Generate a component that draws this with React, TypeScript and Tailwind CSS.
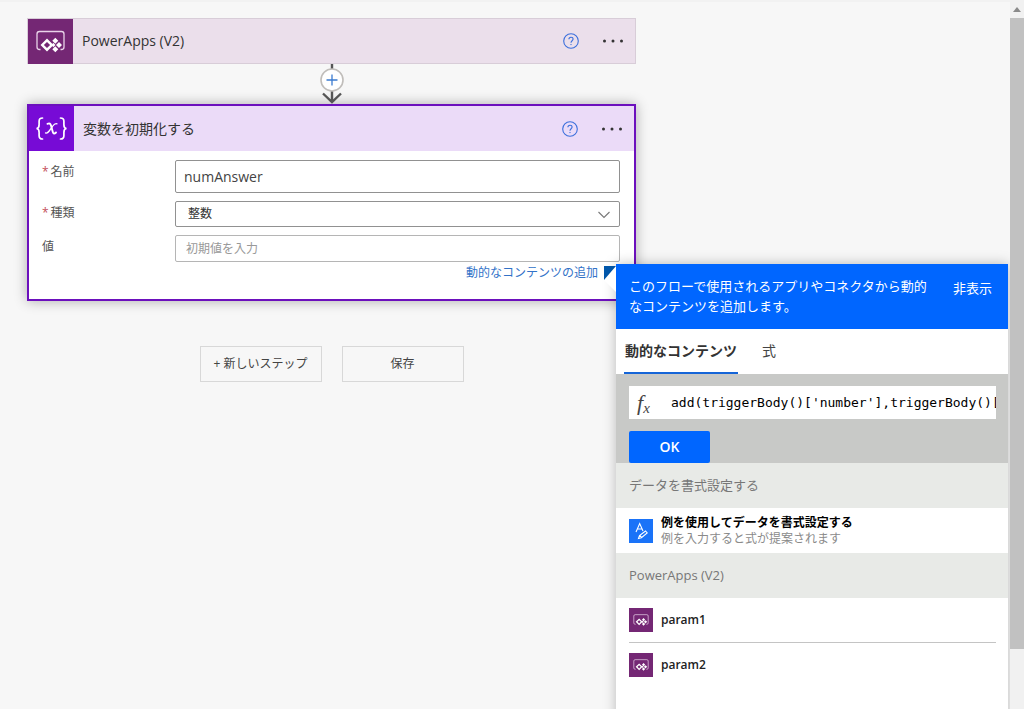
import type { ReactNode } from "react";

function PowerAppsIcon({ className }: { className: string }) {
  return (
    <svg viewBox="0 0 45 45" className={className} aria-hidden="true">
      <rect width="45" height="45" fill="#742774" />
      <path
        d="M12.500 30.500h-1a2.500 2.500 0 0 1-2.500-2.500V15a2.500 2.500 0 0 1 2.500-2.500h22a2.500 2.500 0 0 1 2.500 2.500v13a2.500 2.500 0 0 1-2.500 2.500h-1"
        fill="none"
        stroke="#e9d3e9"
        strokeWidth="1.3"
      />
      <path
        fillRule="evenodd"
        fill="#fff"
        d="M19 19.500l6.500 6.500-6.500 6.500-6.500-6.500zM19 22.900l-3.100 3.100 3.100 3.100 3.100-3.100z"
      />
      <path
        fill="#fff"
        d="M27.300 18.800l3 3-3 3-3-3zM31 23l3 3-3 3-3-3zM27.300 27.200l3 3-3 3-3-3zM25.200 23.700l2.300 2.300-2.300 2.300-1.500-2.300z"
      />
    </svg>
  );
}

function VariableIcon() {
  return (
    <svg viewBox="0 0 45 45" className="size-[45px] shrink-0 bg-[#770bd6]" aria-hidden="true">
      <g fill="none" stroke="#fff" strokeLinecap="round">
        <path
          strokeWidth="1.7"
          d="M13.500 12c-2.700 0-3.400 1-3.400 3.300v3.400c0 2.300-.8 3.600-2.600 3.800 1.800.2 2.600 1.500 2.600 3.800v3.400c0 2.300.7 3.300 3.400 3.300"
        />
        <path
          strokeWidth="1.7"
          d="M31.500 12c2.700 0 3.400 1 3.400 3.300v3.400c0 2.300.8 3.600 2.600 3.800-1.800.2-2.600 1.500-2.600 3.800v3.400c0 2.300-.7 3.300-3.400 3.300"
        />
        <path strokeWidth="1.9" d="M18.500 17.800c2-1 3-.2 3.500 1.700l1.800 6.500c.5 1.800 1.500 2.200 3.200.5" />
        <path strokeWidth="1.300" d="M28 17.800c-1.700-.6-3 .5-4.200 2.200l-3.600 5c-1.200 1.700-2.200 2.500-3.700 1.900" />
      </g>
    </svg>
  );
}

function FormatIcon() {
  return (
    <svg viewBox="0 0 24 24" className="size-6 shrink-0 bg-[#1a73f8]" fill="none" stroke="#fff" aria-hidden="true">
      <path d="M7 13l3.700-8.500L14 12M8.400 10h4.600" strokeWidth="1.100" />
      <path d="M9.500 19.500l1-3 6-4.500 1.700 2-5.800 4.700zM11 16.500l1.700 2" strokeWidth="1.100" />
    </svg>
  );
}

function HeaderActions() {
  return (
    <div className="ml-auto flex items-center gap-4 pr-2">
      <button type="button" aria-label="ヘルプ" className="p-1">
        <svg viewBox="0 0 16 16" className="size-4" fill="none" stroke="#3b6fdc" aria-hidden="true">
          <circle cx="8" cy="8" r="7.300" strokeWidth="1.100" />
          <path d="M5.900 6.300c0-1.300.9-2.100 2.100-2.100s2.100.8 2.100 1.900c0 1.600-2.100 1.800-2.100 3.600" strokeWidth="1.100" />
          <circle cx="8" cy="11.600" r=".4" fill="#3b6fdc" strokeWidth=".5" />
        </svg>
      </button>
      <button type="button" aria-label="メニュー" className="py-2">
        <svg viewBox="0 0 28 4" className="h-1 w-7" fill="#333" aria-hidden="true">
          <circle cx="5.500" cy="2" r="1.500" />
          <circle cx="14" cy="2" r="1.500" />
          <circle cx="22.500" cy="2" r="1.500" />
        </svg>
      </button>
    </div>
  );
}

function Field({ id, label, required, children }: { id: string; label: string; required?: boolean; children: ReactNode }) {
  return (
    <div className="flex">
      <label htmlFor={id} className="w-[133px] shrink-0 pt-1 text-xs text-[#555]">
        {required && <span className="mr-0.5 text-[#c4505a]">*</span>}
        {label}
      </label>
      <div className="relative min-w-0 flex-1">{children}</div>
    </div>
  );
}

function DynamicContentPanel() {
  return (
    <aside className="absolute top-0.5 left-full z-10 -ml-1 h-screen w-[392px] bg-white shadow-[0_0_12px_rgba(0,0,0,0.25)]">
      <svg viewBox="0 0 12 26" className="absolute top-0.5 -left-3 h-[26px] w-3" aria-hidden="true">
        <path d="M12 0v26L0 14z" fill="#fff" />
      </svg>
      <header className="flex h-[65px] items-start bg-[#0066ff] pt-3 pr-4 pl-[13px] text-[13px] leading-5 text-white">
        <p className="w-[308px]">このフローで使用されるアプリやコネクタから動的なコンテンツを追加します。</p>
        <button type="button" className="ml-auto whitespace-nowrap leading-6">非表示</button>
      </header>
      <div role="tablist" className="flex h-[45px] gap-6 px-2 text-sm">
        <button type="button" role="tab" aria-selected="true" className="border-b-2 border-[#1565d8] px-px font-bold text-[#333]">
          動的なコンテンツ
        </button>
        <button type="button" role="tab" aria-selected="false" className="border-b-2 border-transparent text-[#444]">
          式
        </button>
      </div>
      <div className="bg-[#c8c9c7] pt-3 pr-3 pl-[13px]">
        <label className="flex h-[33px] items-center bg-white">
          <span className="w-[42px] shrink-0 pl-2 font-['Liberation_Serif',serif] text-[22px] leading-none text-[#444] italic" aria-hidden="true">
            f<sub className="text-[15px]">x</sub>
          </span>
          <input
            aria-label="式"
            className="min-w-0 flex-1 bg-transparent font-['DejaVu_Sans_Mono',monospace] text-[13px] text-black outline-none"
            defaultValue="add(triggerBody()['number'],triggerBody()['number_1'])"
          />
        </label>
        <button type="button" className="mt-3 h-8 w-[81px] rounded-xs bg-[#0066ff] text-sm font-semibold text-white">
          OK
        </button>
      </div>
      <h2 className="flex h-[45px] items-center bg-[#e8eae7] px-[13px] text-[13px] text-[#777]">データを書式設定する</h2>
      <button type="button" className="flex h-[45px] w-full items-center gap-2 px-[13px] text-left text-xs">
        <FormatIcon />
        <span>
          <span className="block font-bold text-black">例を使用してデータを書式設定する</span>
          <span className="block text-[#8a8a8a]">例を入力すると式が提案されます</span>
        </span>
      </button>
      <h2 className="flex h-[45px] items-center bg-[#e8eae7] px-[13px] text-[13px] text-[#777]">PowerApps (V2)</h2>
      <ul className="divide-y divide-[#c4c4c4] pr-3 pl-[13px]">
        {["param1", "param2"].map((name) => (
          <li key={name}>
            <button type="button" className="flex h-[44px] w-full items-center gap-2 text-left text-xs font-semibold text-[#222]">
              <PowerAppsIcon className="size-6 shrink-0" />
              {name}
            </button>
          </li>
        ))}
      </ul>
    </aside>
  );
}

function Connector() {
  return (
    <div className="flex h-10 justify-center">
      <button type="button" aria-label="新しいステップの挿入">
        <svg viewBox="0 0 26 40" className="h-10 w-[26px]" fill="none" aria-hidden="true">
          <path d="M13 0v38M4 29.500l9 8.500 9-8.500" stroke="#555" strokeWidth="2.400" />
          <circle cx="13" cy="16" r="11" fill="#fff" stroke="#c0bdba" strokeWidth="1.600" />
          <path d="M7.500 16h11M13 10.500v11" stroke="#3b7bd0" strokeWidth="1.300" />
        </svg>
      </button>
    </div>
  );
}

export default function App() {
  return (
    <div className="flex h-screen overflow-hidden bg-[#f7f7f7] font-['Open_Sans','Noto_Sans_CJK_JP',sans-serif] text-[#333]">
      <main className="min-w-0 flex-1 overflow-hidden border-t-2 border-[#f2f2f2] pt-4 pl-[27px]">
        <div className="w-full max-w-[609px]">
          <section className="flex h-[46px] items-center border border-[#d8cdd8] bg-[#ebdfeb]">
            <PowerAppsIcon className="size-[45px] shrink-0" />
            <h1 className="pl-[9px] text-sm">PowerApps (V2)</h1>
            <HeaderActions />
          </section>

          <Connector />

          <section className="border-2 border-[#6c10bd] bg-white shadow-[0_0_12px_rgba(0,0,0,0.3)]">
            <header className="flex h-[45px] items-center bg-[#ebdbf8]">
              <VariableIcon />
              <h1 className="pl-[9px] text-sm">変数を初期化する</h1>
              <HeaderActions />
            </header>
            <form className="flex flex-col gap-2 pt-[9px] pr-3.5 pb-[15px] pl-[13px]">
              <Field id="name" label="名前" required>
                <input
                  id="name"
                  defaultValue="numAnswer"
                  className="block h-[33px] w-full rounded-xs border border-[#919191] bg-white px-2 text-sm text-[#444] outline-none"
                />
              </Field>
              <Field id="type" label="種類" required>
                <select
                  id="type"
                  className="block h-[26px] w-full appearance-none rounded-xs border border-[#919191] bg-white px-3 text-xs text-[#333] outline-none"
                >
                  <option>整数</option>
                </select>
                <svg viewBox="0 0 12 8" className="pointer-events-none absolute top-2.5 right-2.5 h-2 w-3" fill="none" aria-hidden="true">
                  <path d="M.5 1L6 6.500 11.500 1" stroke="#777" strokeWidth="1.100" />
                </svg>
              </Field>
              <Field id="value" label="値">
                <input
                  id="value"
                  placeholder="初期値を入力"
                  className="block h-[27px] w-full rounded-xs border border-[#b5b5b5] bg-white px-2.5 text-xs outline-none placeholder:text-[#999]"
                />
                <div className="relative flex h-[22px] items-center justify-end gap-1.5">
                  <a href="#dynamic" className="text-xs text-[#3272c8]">動的なコンテンツの追加</a>
                  <span className="h-3.5 w-4 bg-[#0058ad]" />
                  <DynamicContentPanel />
                </div>
              </Field>
            </form>
          </section>

          <div className="mt-[45px] flex justify-center gap-5 text-xs text-[#444]">
            <button type="button" className="h-9 w-[122px] border border-[#d8d8d8] whitespace-nowrap">+ 新しいステップ</button>
            <button type="button" className="h-9 w-[122px] border border-[#d8d8d8] whitespace-nowrap">保存</button>
          </div>
        </div>
      </main>

      <div className="w-3.5 shrink-0 bg-[#f1f1f1]" aria-hidden="true">
        <div className="flex h-[18px] items-center justify-center">
          <svg viewBox="0 0 8 5" className="h-[5px] w-2">
            <path d="M4 0l4 5H0z" fill="#8a8a8a" />
          </svg>
        </div>
        <div className="h-[89%] bg-[#c1c1c1]" />
      </div>
    </div>
  );
}
